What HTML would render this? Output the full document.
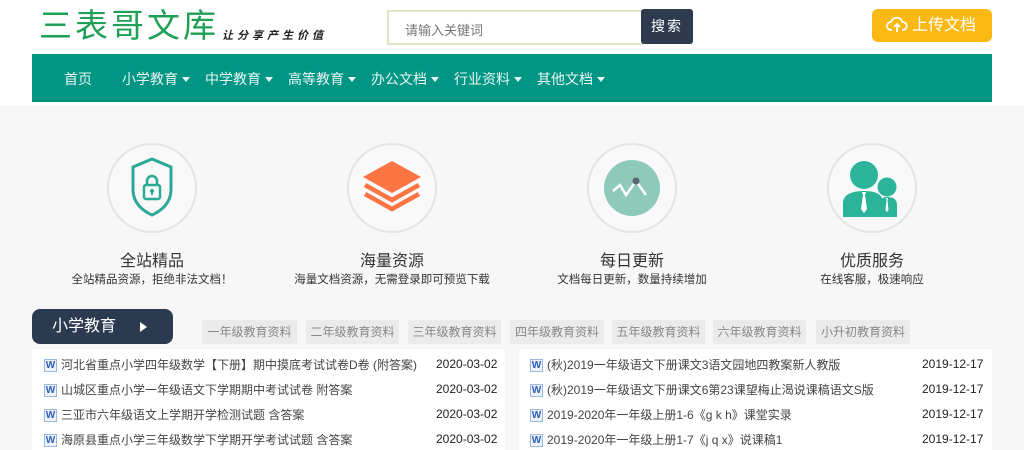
<!DOCTYPE html>
<html><head><meta charset="utf-8"><style>
*{margin:0;padding:0;box-sizing:border-box}
body{width:1024px;height:450px;overflow:hidden;background:#f7f7f7;font-family:"Liberation Sans","Noto Sans CJK SC",sans-serif;position:relative}
.hdr{position:absolute;left:0;top:0;width:1024px;height:106px;background:#fff}
.abs{position:absolute}
.logo{left:39px;top:6px;font-size:33px;line-height:40px;color:#1fa055;letter-spacing:3px;white-space:nowrap}
.slogan{left:222px;top:27px;font-size:11px;color:#222;font-weight:bold;letter-spacing:4px;font-style:italic}
.search{left:387px;top:10px;width:256px;height:35px;border:2px solid #dfe6c8;background:#fff;font-size:13px;color:#777;padding:8px 0 0 16px}
.btn{left:641px;top:9px;width:52px;height:35px;background:#2e3b4e;border-radius:3px;color:#fff;font-size:14px;text-align:center;line-height:35px;letter-spacing:2px}
.up{left:872px;top:9px;width:120px;height:33px;background:#fdb913;border-radius:6px;color:#fff;font-size:16px;line-height:33px;padding-left:40px}
.nav{left:32px;top:54px;width:960px;height:48px;background:#009683}
.nav span{position:absolute;top:15px;color:#e8f5f3;font-size:14px;white-space:nowrap}
.nav i{display:inline-block;width:0;height:0;border-left:4px solid transparent;border-right:4px solid transparent;border-top:5px solid #e8f5f3;margin-left:4px;vertical-align:2px}
.circ{width:90px;height:90px;border-radius:50%;background:#f9f9f9;border:2px solid #e4e4e4;top:143px}
.t1{top:247px;font-size:16px;color:#333;width:240px;text-align:center}
.t2{top:271px;font-size:11.5px;color:#333;width:240px;text-align:center}
.cat{left:32px;top:309px;width:141px;height:35px;background:#2b3a51;border-radius:8px;color:#fff;font-size:16px;line-height:35px;padding-left:20px}
.sub{top:320px;height:24px;background:#ebebeb;font-size:12px;color:#888;line-height:24px;text-align:center}
.panel{top:349px;height:101px;background:#fff}
.row{position:absolute;font-size:12px;height:16px;color:#444;white-space:nowrap;display:flex;align-items:center}
.w{display:block;flex:none;width:13px;height:13px;border:1px solid #9bb8e0;background:#eef3fb;color:#2c5fb8;font-size:10px;font-weight:bold;line-height:11px;text-align:center;margin-right:4px;margin-top:2px}
.d{position:absolute;font-size:12px;line-height:16px;color:#222}
</style></head><body>
<div class="hdr"></div>
<div class="abs logo">三表哥文库</div>
<div class="abs slogan">让分享产生价值</div>
<div class="abs search">请输入关键词</div>
<div class="abs btn">搜索</div>
<div class="abs up"><svg class="abs" style="left:14px;top:7px" width="22" height="18" viewBox="0 0 22 18" fill="none" stroke="#fff" stroke-width="1.8"><path d="M6 14H5a4 4 0 0 1 0-8 6 6 0 0 1 11.5 0A4 4 0 0 1 17 14h-1"/><path d="M11 16V8M8 11l3-3 3 3"/></svg>上传文档</div>
<div class="abs nav">
<span style="left:32px">首页</span>
<span style="left:90px">小学教育<i></i></span>
<span style="left:173px">中学教育<i></i></span>
<span style="left:256px">高等教育<i></i></span>
<span style="left:339px">办公文档<i></i></span>
<span style="left:422px">行业资料<i></i></span>
<span style="left:505px">其他文档<i></i></span>
</div>

<div class="abs circ" style="left:107px"><svg width="86" height="86" viewBox="0 0 86 86"><path d="M43 14 L62 22 V45 C62 58 52 66 43 70 C34 66 24 58 24 45 V22 Z" fill="none" stroke="#2aa898" stroke-width="3"/><rect x="35" y="40" width="16" height="14" rx="2" fill="none" stroke="#2aa898" stroke-width="2.5"/><path d="M38 40v-4a5 5 0 0 1 10 0v4" fill="none" stroke="#2aa898" stroke-width="2.5"/><circle cx="43" cy="46" r="2" fill="#2aa898"/><rect x="42" y="46" width="2" height="4" fill="#2aa898"/></svg></div>
<div class="abs circ" style="left:347px"><svg width="86" height="86" viewBox="0 0 86 86"><path d="M43 16 L72 32 L43 48 L14 32Z" fill="#fb7442"/><path d="M16 40 L43 55 L70 40" fill="none" stroke="#fb7442" stroke-width="4.5"/><path d="M16 49 L43 64 L70 49" fill="none" stroke="#fb7442" stroke-width="4.5"/></svg></div>
<div class="abs circ" style="left:587px"><svg width="86" height="86" viewBox="0 0 86 86"><circle cx="43" cy="43" r="28" fill="#8dcab9"/><path d="M24 46 L31 40 L37 50 L47 36 L57 50" fill="none" stroke="#fff" stroke-width="2.5"/><circle cx="47" cy="36" r="3.5" fill="#5b6472"/></svg></div>
<div class="abs circ" style="left:827px"><svg width="86" height="86" viewBox="0 0 86 86"><circle cx="35" cy="30" r="14" fill="#2bb49a"/><circle cx="58" cy="42" r="9.5" fill="#2bb49a"/><path d="M14 72 V58 C14 50 22 46 35 46 C48 46 54 50 54 58 V72Z" fill="#2bb49a"/><path d="M50 72 V60 C50 54 54 52 58 52 C64 52 68 54 68 60 V72Z" fill="#2bb49a"/><path d="M33 47h4l-1 3 2 14-3 4-3-4 2-14z" fill="#fff"/><path d="M57 53h2l-0.5 2 1 10-1.5 2-1.5-2 1-10z" fill="#fff"/></svg></div>

<div class="abs t1" style="left:32px">全站精品</div><div class="abs t2" style="left:32px">全站精品资源，拒绝非法文档！</div>
<div class="abs t1" style="left:272px">海量资源</div><div class="abs t2" style="left:272px">海量文档资源，无需登录即可预览下载</div>
<div class="abs t1" style="left:512px">每日更新</div><div class="abs t2" style="left:512px">文档每日更新，数量持续增加</div>
<div class="abs t1" style="left:752px">优质服务</div><div class="abs t2" style="left:752px">在线客服，极速响应</div>

<div class="abs cat">小学教育<span style="position:absolute;left:108px;top:13px;width:0;height:0;border-top:5px solid transparent;border-bottom:5px solid transparent;border-left:7px solid #fff"></span></div>
<div class="abs sub" style="left:202px;width:95px">一年级教育资料</div>
<div class="abs sub" style="left:306px;width:93px">二年级教育资料</div>
<div class="abs sub" style="left:408px;width:93px">三年级教育资料</div>
<div class="abs sub" style="left:510px;width:94px">四年级教育资料</div>
<div class="abs sub" style="left:612px;width:93px">五年级教育资料</div>
<div class="abs sub" style="left:713px;width:93px">六年级教育资料</div>
<div class="abs sub" style="left:816px;width:94px">小升初教育资料</div>

<div class="abs panel" style="left:32px;width:473px"></div>
<div class="abs panel" style="left:519px;width:473px"></div>
<div class="row" style="left:44px;top:356px"><span class="w">W</span>河北省重点小学四年级数学【下册】期中摸底考试试卷D卷 (附答案)</div>
<div class="row" style="left:44px;top:381px"><span class="w">W</span>山城区重点小学一年级语文下学期期中考试试卷 附答案</div>
<div class="row" style="left:44px;top:406px"><span class="w">W</span>三亚市六年级语文上学期开学检测试题 含答案</div>
<div class="row" style="left:44px;top:431px"><span class="w">W</span>海原县重点小学三年级数学下学期开学考试试题 含答案</div>
<div class="d" style="left:436px;top:356px">2020-03-02</div>
<div class="d" style="left:436px;top:381px">2020-03-02</div>
<div class="d" style="left:436px;top:406px">2020-03-02</div>
<div class="d" style="left:436px;top:431px">2020-03-02</div>
<div class="row" style="left:530px;top:356px"><span class="w">W</span>(秋)2019一年级语文下册课文3语文园地四教案新人教版</div>
<div class="row" style="left:530px;top:381px"><span class="w">W</span>(秋)2019一年级语文下册课文6第23课望梅止渴说课稿语文S版</div>
<div class="row" style="left:530px;top:406px"><span class="w">W</span>2019-2020年一年级上册1-6《g k h》课堂实录</div>
<div class="row" style="left:530px;top:431px"><span class="w">W</span>2019-2020年一年级上册1-7《j q x》说课稿1</div>
<div class="d" style="left:922px;top:356px">2019-12-17</div>
<div class="d" style="left:922px;top:381px">2019-12-17</div>
<div class="d" style="left:922px;top:406px">2019-12-17</div>
<div class="d" style="left:922px;top:431px">2019-12-17</div>
</body></html>
